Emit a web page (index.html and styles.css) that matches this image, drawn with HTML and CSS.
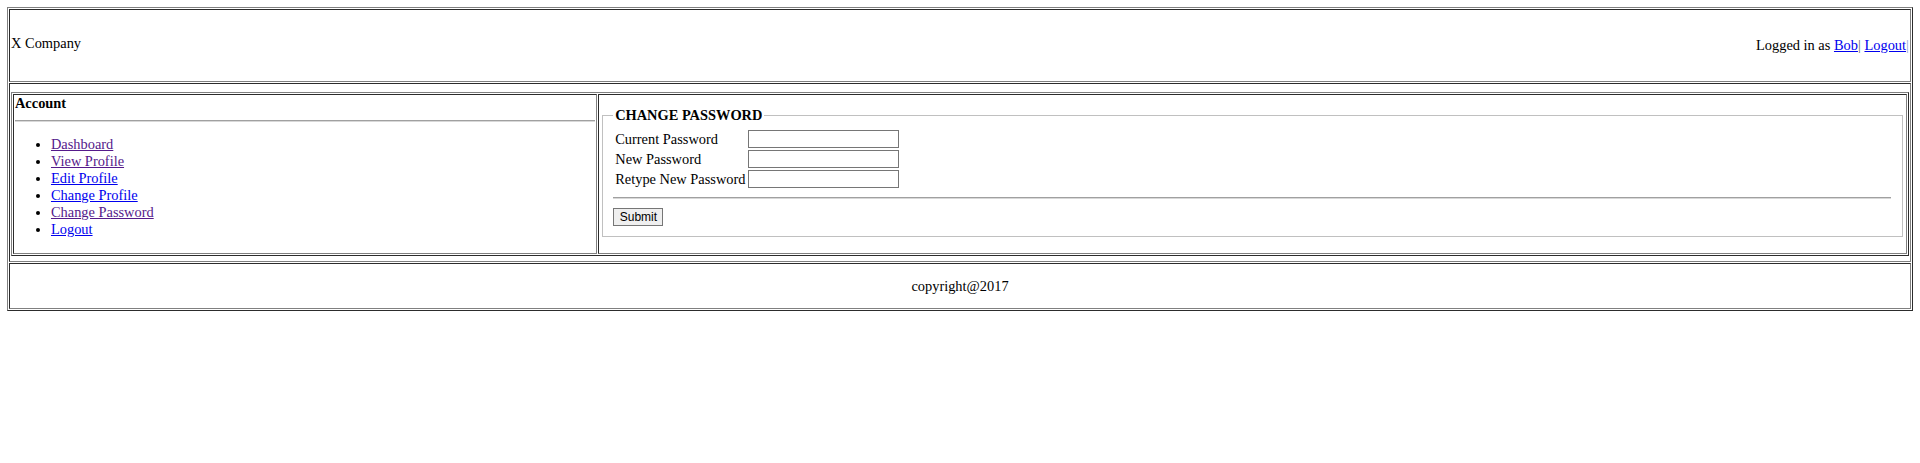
FILE: index.html
```html
<!DOCTYPE html>
<html lang="en">
<head>
<meta charset="utf-8">
<title>Change Password - X Company</title>
<link rel="stylesheet" href="styles.css">
</head>
<body>
<table class="grid page">
  <tbody>
    <tr>
      <td class="header">
        <div class="header-bar">
          <span class="brand">X Company</span>
          <span class="user">Logged in as <a href="#">Bob</a><span class="sep">|</span> <a href="#">Logout</a><span class="sep sep-light">|</span></span>
        </div>
      </td>
    </tr>
    <tr>
      <td class="main">
        <table class="grid inner">
          <tbody>
            <tr>
              <td class="side">
                <div class="side-title">Account</div>
                <hr class="rule">
                <ul class="nav">
                  <li><a class="visited" href="#">Dashboard</a></li>
                  <li><a class="visited" href="#">View Profile</a></li>
                  <li><a href="#">Edit Profile</a></li>
                  <li><a href="#">Change Profile</a></li>
                  <li><a class="visited" href="#">Change Password</a></li>
                  <li><a href="#">Logout</a></li>
                </ul>
              </td>
              <td class="content">
                <form class="pw-form">
                  <fieldset class="pw-box">
                    <legend class="pw-title">CHANGE PASSWORD</legend>
                    <table class="pw-fields">
                      <tbody>
                        <tr><td class="lbl">Current Password</td><td><input class="field" type="password"></td></tr>
                        <tr><td class="lbl">New Password</td><td><input class="field" type="password"></td></tr>
                        <tr><td class="lbl">Retype New Password</td><td><input class="field" type="password"></td></tr>
                      </tbody>
                    </table>
                    <hr class="rule">
                    <div class="actions"><button type="button" class="submit">Submit</button></div>
                  </fieldset>
                </form>
              </td>
            </tr>
          </tbody>
        </table>
      </td>
    </tr>
    <tr>
      <td class="footer">
        <div class="footer-bar">copyright@2017</div>
      </td>
    </tr>
  </tbody>
</table>
</body>
</html>
```

FILE: styles.css
```css
html {
  background: #fff;
}

body {
  margin: 7.2px;
  font-family: "Liberation Serif", "Times New Roman", serif;
  font-size: 14.4px;
  line-height: 17px;
  color: #000;
  background: #fff;
}

a {
  color: #0000ee;
  text-decoration: underline;
}

a.visited {
  color: #551a8b;
}

.grid {
  border: 1px outset #808080;
  border-collapse: separate;
  border-spacing: 1.8px;
  width: 100%;
}

.grid > tbody > tr > td {
  border: 1px inset #808080;
  padding: 0.9px;
  vertical-align: middle;
}

.header-bar {
  height: 69px;
  display: flex;
  justify-content: space-between;
  align-items: center;
}

.brand {
  margin-bottom: 3.5px;
}

.sep {
  color: #666;
}

.sep-light {
  color: #8fa0d8;
}

.grid > tbody > tr > td.main {
  padding: 7.6px 0.9px 5.1px;
}

.grid > tbody > tr > td.side {
  width: 580px;
}

.side-title {
  font-weight: bold;
}

.rule {
  margin: 7.2px 0;
  border: 0;
  border-top: 1px solid #a0a0a0;
  border-bottom: 1px solid #d8d8d8;
  height: 0;
}

.nav {
  margin: 14.4px 0;
  padding-left: 36px;
  list-style: disc;
}

.pw-form {
  margin: 0 0 3.6px;
}

.pw-box {
  margin: 0 1.8px;
  padding: 5px 10.8px 10.6px;
  border: 1px solid #c0c0c0;
}

.pw-title {
  padding: 0 1.8px;
  font-weight: bold;
}

.pw-fields {
  border-collapse: separate;
  border-spacing: 1.8px;
  margin: 0 0 5.6px;
}

.pw-fields td {
  padding: 0.45px 0.9px;
  white-space: nowrap;
  vertical-align: middle;
}

.field {
  display: block;
  width: 151px;
  height: 18px;
  box-sizing: border-box;
  margin: 0;
  padding: 0 2px;
  border: 1px solid #767676;
  background: #fff;
  font-family: "Liberation Sans", Arial, sans-serif;
  font-size: 12px;
}

.actions {
  display: flex;
  padding-top: 2px;
}

.submit {
  height: 18px;
  box-sizing: border-box;
  margin: 0;
  padding: 0 5.4px;
  border: 1px solid #767676;
  border-radius: 0;
  background: #efefef;
  color: #000;
  font-family: "Liberation Sans", Arial, sans-serif;
  font-size: 12px;
  line-height: 14px;
}

.footer-bar {
  height: 42.2px;
  display: flex;
  justify-content: center;
  align-items: center;
}
```
